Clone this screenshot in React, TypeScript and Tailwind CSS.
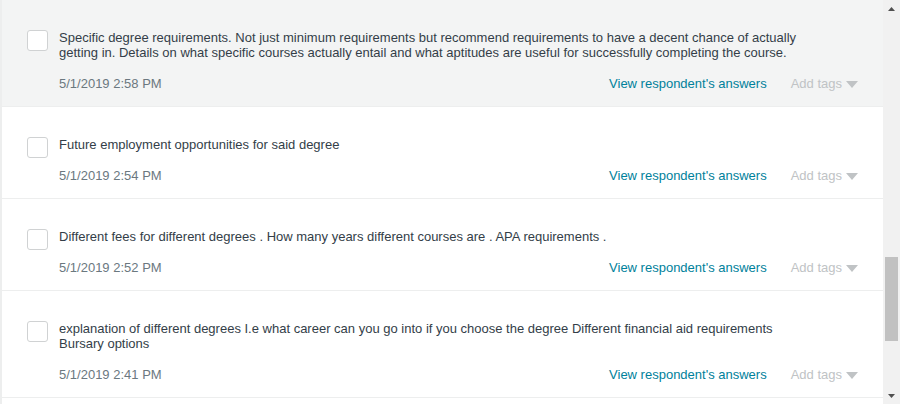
import React from "react";

const responses = [
  {
    text: "Specific degree requirements. Not just minimum requirements but recommend requirements to have a decent chance of actually getting in. Details on what specific courses actually entail and what aptitudes are useful for successfully completing the course.",
    date: "5/1/2019 2:58 PM",
    hover: true,
  },
  { text: "Future employment opportunities for said degree", date: "5/1/2019 2:54 PM" },
  {
    text: "Different fees for different degrees . How many years different courses are . APA requirements .",
    date: "5/1/2019 2:52 PM",
  },
  {
    text: "explanation of different degrees I.e what career can you go into if you choose the degree Different financial aid requirements Bursary options",
    date: "5/1/2019 2:41 PM",
  },
];

function ResponseRow({ text, date, hover }: { text: string; date: string; hover?: boolean }) {
  return (
    <div className={`border-b border-[#edeeee] pt-[30px] pb-[13px] pl-[25px] pr-[25px] ${hover ? "bg-[#f3f4f4]" : "bg-white"}`}>
      <div className="flex gap-[11px]">
        <div className="h-[21px] w-[21px] shrink-0 rounded-[3px] border border-[#d0d2d3] bg-white" />
        <div className="flex-1">
          <p className="max-w-[760px] text-[13px] leading-[15px] text-[#333e48]">{text}</p>
          <div className="mt-[15px] flex items-center justify-between">
            <span className="text-[13px] leading-[18px] text-[#6b787f]">{date}</span>
            <div className="flex items-center">
              <a className="text-[13px] leading-[18px] text-[#00819b]">View respondent's answers</a>
              <span className="ml-[24px] flex items-center text-[13px] leading-[18px] text-[#c0c3c5]">
                Add tags
                <svg width="12" height="7" viewBox="0 0 12 7" className="ml-[4px]">
                  <path d="M0 0h12L6 7z" fill="#c0c3c5" />
                </svg>
              </span>
            </div>
          </div>
        </div>
      </div>
    </div>
  );
}

export default function App() {
  return (
    <div
      className="flex h-[404px] w-[900px] overflow-hidden bg-white"
      style={{ fontFamily: '"Liberation Sans", Arial, sans-serif' }}
    >
      <div className="flex-1 overflow-hidden border-l-2 border-[#edeeee]">
        {responses.map((r) => (
          <ResponseRow key={r.date} {...r} />
        ))}
      </div>
      {/* scrollbar */}
      <div className="flex w-[17px] flex-col items-center bg-[#f1f1f1]">
        <div className="flex h-[17px] items-center justify-center">
          <svg width="7" height="4" viewBox="0 0 7 4">
            <path d="M0 4h7L3.5 0z" fill="#505050" />
          </svg>
        </div>
        <div className="mt-[240px] h-[84px] w-[13px] bg-[#c1c1c1]" />
        <div className="mt-auto flex h-[17px] items-center justify-center">
          <svg width="7" height="4" viewBox="0 0 7 4">
            <path d="M0 0h7L3.5 4z" fill="#505050" />
          </svg>
        </div>
      </div>
    </div>
  );
}
